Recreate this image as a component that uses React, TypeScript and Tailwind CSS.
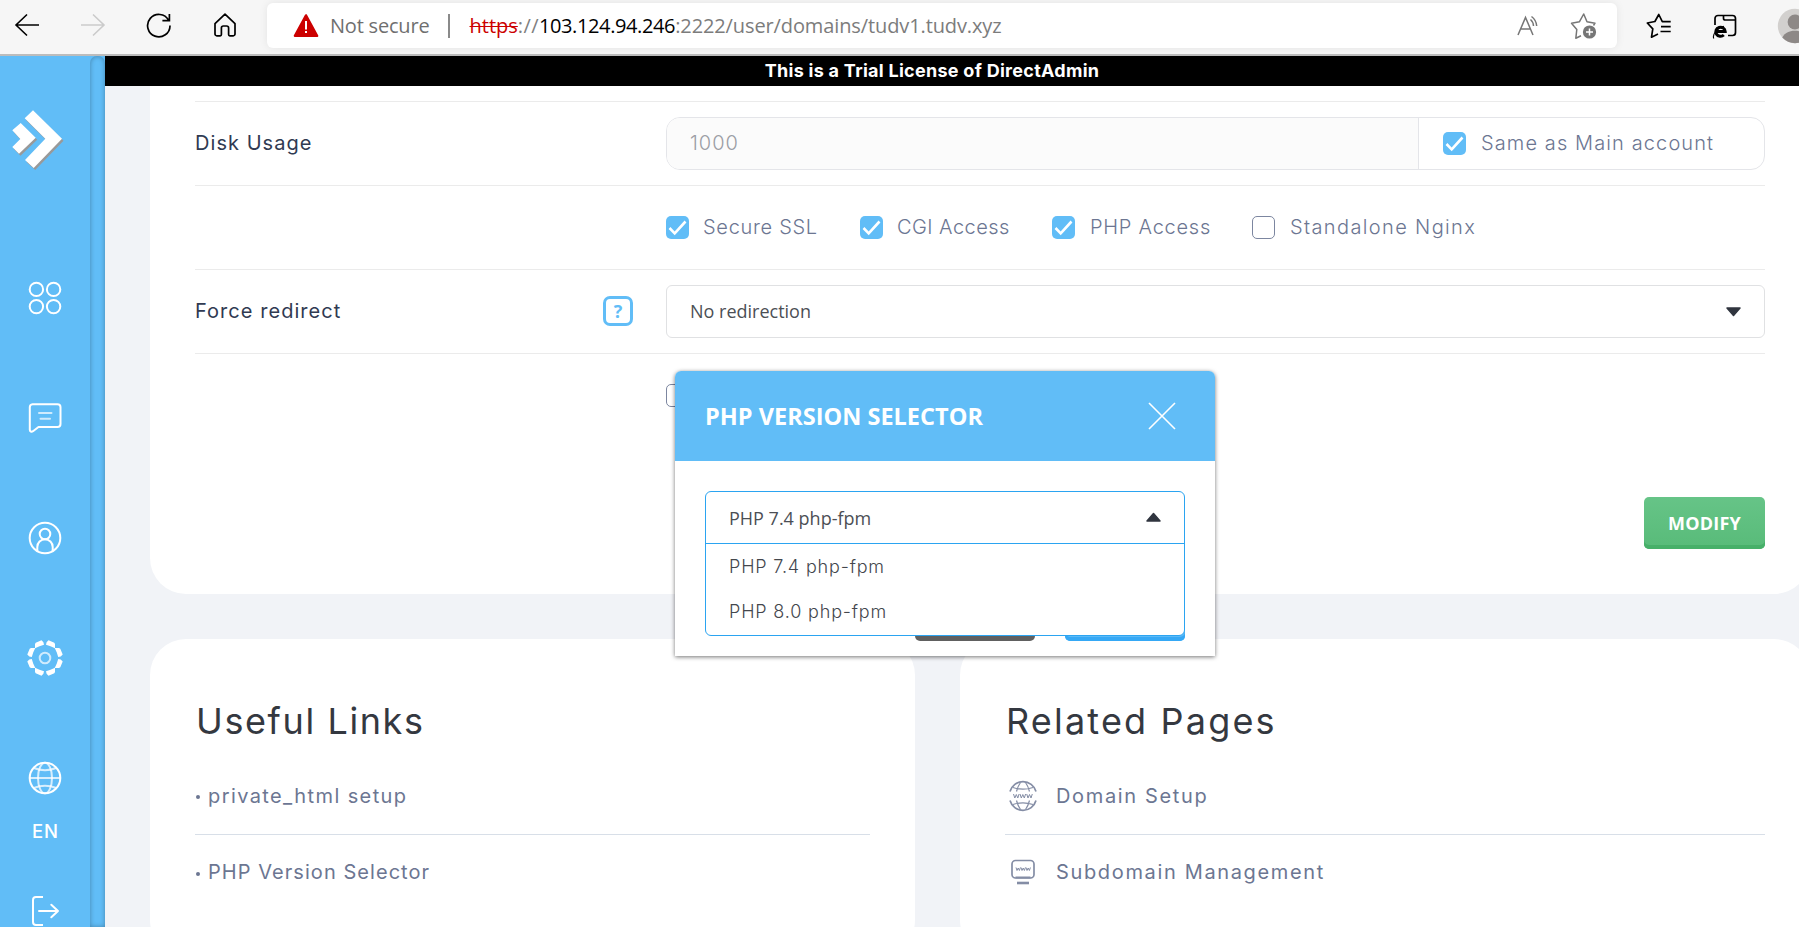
import React from 'react';

function Toolbar() {
  return (
    <header className="flex h-[56px] shrink-0 items-start border-b-2 border-[#bcbcbc] bg-[#f6f6f6] font-['Open_Sans',sans-serif]">
      <svg className="mt-[13px] ml-[14px] h-6 w-[26px] shrink-0" viewBox="0 0 26 24" fill="none" stroke="#000" strokeWidth="1.6">
        <path d="M25 12H2M13 1.5L2 12l11 10.5" />
      </svg>
      <svg className="mt-[13px] ml-[40px] h-6 w-[26px] shrink-0" viewBox="0 0 26 24" fill="none" stroke="#cbcbcb" strokeWidth="1.6">
        <path d="M1 12h23M13 1.5L24 12 13 22.5" />
      </svg>
      <svg className="mt-[12px] ml-[40px] h-[27px] w-[27px] shrink-0" viewBox="0 0 27 27" fill="none" stroke="#000" strokeWidth="1.7">
        <path d="M24 13.5A11.2 11.2 0 1 1 22.6 8.2M23.4 2v6.6h-7" />
      </svg>
      <svg className="mt-[12px] ml-[39px] h-[26px] w-[26px] shrink-0" viewBox="0 0 26 26" fill="none" stroke="#000" strokeWidth="1.7" strokeLinejoin="round">
        <path d="M3 11.6L13 2.2l10 9.4V22a1.8 1.8 0 0 1-1.8 1.8h-3.4A1.2 1.2 0 0 1 16.600 22.600V16a2 2 0 0 0-2-2h-3.200a2 2 0 0 0-2 2v6.600A1.200 1.200 0 0 1 8.200 23.800H4.800A1.800 1.800 0 0 1 3 22z" />
      </svg>
      <div className="mt-[3px] ml-[29px] flex h-[45px] w-[1350px] shrink-0 items-center rounded-[6px] bg-white text-[20px] leading-[45px] text-[#6f6f6f] shadow-[0_0_8px_rgba(0,0,0,0.08)]">
        <svg className="ml-[26px] h-6 w-[26px] shrink-0" viewBox="0 0 26 24">
          <path d="M13 1.500L24 21.800H2z" fill="#cc0000" stroke="#cc0000" strokeWidth="2.600" strokeLinejoin="round" />
          <rect x="12" y="7" width="2" height="8.500" fill="#fff" />
          <rect x="12" y="17" width="2" height="2" fill="#fff" />
        </svg>
        <span className="ml-[11px] w-[100px] whitespace-nowrap tracking-[-0.2px]">Not secure</span>
        <span className="ml-[18px] h-6 w-[1.500px] bg-[#8a8a8a]" />
        <span className="ml-[20px] flex whitespace-nowrap">
          <span className="text-[#cc0000] line-through decoration-1">https</span>
          <span className="tracking-[0.400px] text-[#808080]">://</span>
          <span className="tracking-[-0.380px] text-black">103.124.94.246</span>
          <span className="tracking-[-0.110px] text-[#7c7c7c]">:2222/user/domains/tudv1.tudv.xyz</span>
        </span>
        <svg className="mr-[28px] ml-auto h-[26px] w-[26px] shrink-0" viewBox="0 0 26 26" fill="none" stroke="#767676" strokeWidth="1.500">
          <path d="M2 22L9.500 4.500 17 22M5 16h9M14.500 6.500a9 9 0 0 1 3 6.500M15.500 3.500a13 13 0 0 1 5.200 9.500" />
        </svg>
        <svg className="mr-[19px] h-[28px] w-[28px] shrink-0" viewBox="0 0 28 28" fill="none">
          <path d="M11 23.800l-5.200 2.500 1-8.800-5.300-6.300 8-1.500 4.200-7.700L17 9.700l8 1.500-1.500 2.300" stroke="#767676" strokeWidth="1.500" strokeLinejoin="round" />
          <circle cx="19.500" cy="20" r="6.600" fill="#767676" />
          <path d="M19.500 16.500v7M16 20h7" stroke="#fff" strokeWidth="1.500" />
        </svg>
      </div>
      <svg className="mt-[12px] ml-[28px] h-[27px] w-[28px] shrink-0" viewBox="0 0 28 27" fill="none" stroke="#000" strokeWidth="1.700" strokeLinejoin="round">
        <path d="M13 22l-6.500 3.200 1.300-8.400L2.300 11l7.600-1.500L13.800 2.500l3.500 7.200h8.400M16 14.600h9.700M15.500 19.500h10.200" />
      </svg>
      <svg className="mt-[12px] ml-[39px] h-[28px] w-[26px] shrink-0" viewBox="0 0 26 28" fill="none" stroke="#000">
        <path d="M3 13V6.500A3 3 0 0 1 6 3.500h14.500a3 3 0 0 1 3 3V20.500a3 3 0 0 1-3 3h-4.500M11.500 3.500v2.700a1.800 1.800 0 0 0 1.800 1.800h10" strokeWidth="1.700" />
        <path d="M3.800 19.500H13.200A4.700 4.500 0 1 0 11.800 23" strokeWidth="3" />
        <path d="M1.800 26.500C0 23 5 15.500 12 14.200" strokeWidth="1.100" />
      </svg>
      <svg className="mt-[8px] ml-[39px] h-[36px] w-[36px] shrink-0" viewBox="0 0 36 36">
        <circle cx="18" cy="18" r="17.200" fill="#d2d0ce" />
        <circle cx="18" cy="14" r="7.400" fill="#8d8886" />
        <path d="M5.300 29.600C7.500 25 12 22.800 18 22.800s10.500 2.200 12.700 6.800A17.200 17.200 0 0 1 5.300 29.600z" fill="#8d8886" />
      </svg>
    </header>
  );
}

function NavCell({ children }: { children: React.ReactNode }) {
  return <div className="flex h-[120px] shrink-0 items-center justify-center">{children}</div>;
}

const quarterTurns = [0, 90, 180, 270];

function Sidebar() {
  return (
    <nav className="flex h-full w-[105px] shrink-0 bg-[#61bdf7]">
      <div className="flex w-[90px] flex-col overflow-hidden">
        <div className="h-[182px] shrink-0 pt-[52px] pl-[10px]">
          <svg className="h-[64px] w-[56px]" viewBox="10 108 56 64">
            <g fill="#999" transform="translate(1.500 2)">
              <path d="M33 110.300L62 138.700 33.700 168 25 160 45.300 138.700 24.700 118.300z" />
              <path d="M20.700 123L35.700 137.700 19 153.700 12.300 147 20.300 139 12.300 130.300z" />
            </g>
            <path d="M33 110.300L62 138.700 33.700 168 25 160 45.300 138.700 24.700 118.300z" fill="#fff" />
            <path d="M20.700 123L35.700 137.700 19 153.700 12.300 147 20.300 139 12.300 130.300z" fill="#fff" />
          </svg>
        </div>
        <NavCell>
          <svg className="h-9 w-9" viewBox="0 0 36 36" fill="none" stroke="#fff" strokeWidth="2">
            <circle cx="9.400" cy="9.400" r="6.700" />
            <circle cx="26.600" cy="9.400" r="6.700" />
            <circle cx="9.400" cy="26.600" r="6.700" />
            <circle cx="26.600" cy="26.600" r="6.700" />
          </svg>
        </NavCell>
        <NavCell>
          <svg className="h-9 w-9" viewBox="0 0 36 36" fill="none" stroke="#fff" strokeWidth="2" strokeLinecap="round" strokeLinejoin="round">
            <path d="M5.500 4.300h25a3 3 0 0 1 3 3V24a3 3 0 0 1-3 3H11.500L6 31.200C4.500 32.200 2.800 31.500 2.800 29.700V7.300a3 3 0 0 1 2.700-3z" />
            <path d="M12 13h12.500M13.500 18.800h9.500" strokeOpacity="0.700" />
          </svg>
        </NavCell>
        <NavCell>
          <svg className="h-9 w-9" viewBox="0 0 36 36" fill="none" stroke="#fff" strokeWidth="2">
            <circle cx="18" cy="18" r="15.300" />
            <circle cx="18" cy="14" r="5.300" />
            <path d="M10.300 31.200v-4.200a7.700 7.700 0 0 1 15.400 0v4.200" />
          </svg>
        </NavCell>
        <NavCell>
          <svg className="h-9 w-9" viewBox="0 0 36 36" fill="none">
            {quarterTurns.map((a) => (
              <g key={a} fill="#fff" transform={`rotate(${a} 18 18)`}>
                <path d="M21.500 0.300L27.300 2.700 28 4V8.300L23.500 6.200 19 4.800 19.600 2.300z" />
                <path d="M14.500 0.300L8.700 2.700 8 4V8.300L12.500 6.200 17 4.800 16.400 2.300z" />
              </g>
            ))}
            <circle cx="18" cy="18" r="5.300" stroke="#fff" strokeWidth="2" strokeOpacity="0.700" />
          </svg>
        </NavCell>
        <div className="flex h-[170px] shrink-0 flex-col items-center pt-[42px]">
          <svg className="h-9 w-9 shrink-0" viewBox="0 0 36 36" fill="none" stroke="#fff" strokeWidth="2">
            <circle cx="18" cy="18" r="15.300" />
            <g strokeOpacity="0.750">
              <path d="M2.700 18h30.600M7 8c6.500 3 15.500 3 22 0M7 28c6.500-3 15.500-3 22 0" />
              <ellipse cx="18" cy="18" rx="7" ry="15.300" />
            </g>
          </svg>
          <span className="mt-[23px] pl-[1px] font-['Inter',sans-serif] text-[18.500px] leading-6 font-medium tracking-[1px] text-white">EN</span>
        </div>
        <svg className="mt-[5px] ml-[30px] h-[34px] w-[30px] shrink-0" viewBox="0 0 30 34" fill="none" stroke="#fff" strokeWidth="2" strokeLinecap="round" strokeLinejoin="round">
          <path d="M13 4H6A3 3 0 0 0 3 7v22a3 3 0 0 0 3 3h7" strokeLinecap="butt" />
          <path d="M9 18h19M21.300 11.800L28 18l-6.700 6.200" />
        </svg>
      </div>
      <div className="w-[15px] rounded-t-[7px] shadow-[inset_0_0_5px_rgba(0,0,0,0.3)]" />
    </nav>
  );
}

function Check({ on = false }: { on?: boolean }) {
  return on ? (
    <span className="flex h-[23px] w-[23px] shrink-0 items-center justify-center rounded-[5px] bg-[#61bdf7]">
      <svg className="h-[17px] w-[19px]" viewBox="0 0 19 17" fill="none" stroke="#fff" strokeWidth="2.600">
        <path d="M1.500 9l5.200 5.300L17.500 2.500" />
      </svg>
    </span>
  ) : (
    <span className="h-[23px] w-[23px] shrink-0 rounded-[5px] border border-[#7c86a0]" />
  );
}

function Row({ label, children }: { label?: string; children: React.ReactNode }) {
  return (
    <div className="flex h-[84px] shrink-0 items-center border-t border-[#ebebeb]">
      <div className="w-[408px] shrink-0 pb-[1px] tracking-[1.050px] text-[#303a52]">{label}</div>
      {children}
    </div>
  );
}

function DomainCard() {
  const label = 'whitespace-nowrap font-light text-[#6c7692]';
  return (
    <section className="flex h-[508px] w-[1660px] shrink-0 flex-col rounded-b-[36px] bg-white px-[45px] pt-[15px]">
      <Row label="Disk Usage">
        <div className="ml-[63px] flex h-[53px] w-[1099px] overflow-hidden rounded-[14px] border border-[#e4e5e9]">
          <div className="flex w-[752px] items-center border-r border-[#e4e5e9] bg-[#fbfbfb] pb-[1px] pl-[23px] font-light tracking-[1px] text-[#9b9ea5]">1000</div>
          <div className={`flex items-center pl-[24px] ${label}`}>
            <Check on />
            <span className="ml-[15px] pb-[1px] tracking-[1.110px]">Same as Main account</span>
          </div>
        </div>
      </Row>
      <Row>
        <div className={`ml-[63px] flex items-center ${label}`}>
          <div className="flex w-[194px] items-center gap-[14px]"><Check on /><span className="pb-[1px] tracking-[0.700px]">Secure SSL</span></div>
          <div className="flex w-[192px] items-center gap-[14px]"><Check on /><span className="pb-[1px] tracking-[0.450px]">CGI Access</span></div>
          <div className="flex w-[200px] items-center gap-[15px]"><Check on /><span className="pb-[1px] tracking-[0.750px]">PHP Access</span></div>
          <div className="flex items-center gap-[15px]"><Check /><span className="pb-[1px] tracking-[1.370px]">Standalone Nginx</span></div>
        </div>
      </Row>
      <Row label="Force redirect">
        <div className="mb-[1px] flex h-[30px] w-[30px] shrink-0 items-center justify-center rounded-[7px] border-3 border-[#61bdf7] font-['Open_Sans',sans-serif] text-[18px] font-bold text-[#61bdf7]">?</div>
        <div className="ml-[33px] flex h-[53px] w-[1099px] items-center justify-between rounded-[6px] border border-[#e0e1e3] pr-[22px] pl-[23px] font-['Open_Sans',sans-serif] text-[18px] text-[#4c4f55]">
          <span className="pb-[2px]">No redirection</span>
          <svg className="h-[10px] w-[17px]" viewBox="0 0 17 10"><path d="M2 1h13L8.500 8.500z" fill="#30353f" stroke="#30353f" strokeWidth="1.500" strokeLinejoin="round" /></svg>
        </div>
      </Row>
      <div className="flex h-[110px] shrink-0 items-start border-t border-[#ebebeb] pt-[30px] pl-[471px]"><Check /></div>
      <button className="mt-[34px] flex h-[52px] w-[121px] shrink-0 items-center justify-center self-end rounded-[5px] bg-linear-to-b from-[#66c487] to-[#58bb79] font-['Open_Sans',sans-serif] text-[18px] leading-6 font-bold tracking-[0.200px] text-white shadow-[inset_0_-4px_0_#47b069]">MODIFY</button>
    </section>
  );
}

function WwwGlobe() {
  return (
    <svg className="ml-[1px] h-[34px] w-[34px] shrink-0" viewBox="0 0 34 34" fill="none" stroke="#848da5" strokeWidth="1.700">
      <path d="M4 12.500a13.500 13.500 0 0 1 26 0M4 21.500a13.500 13.500 0 0 0 26 0" />
      <path d="M7 8.500c6 2 14 2 20 0M7 25.500c6-2 14-2 20 0M10.500 12.500c1-4 2.500-7 4-9M23.500 12.500c-1-4-2.500-7-4-9M10.500 21.500c1 4 2.500 7 4 9M23.500 21.500c-1 4-2.500 7-4 9" strokeWidth="1.200" />
      <path d="M7.500 15l1.300 4 1.500-3.500 1.500 3.500 1.300-4M14 15l1.300 4 1.500-3.500 1.500 3.500 1.300-4M20.700 15l1.300 4 1.500-3.500 1.500 3.500 1.300-4" strokeWidth="1" />
    </svg>
  );
}

function WwwMonitor() {
  return (
    <svg className="ml-[1px] h-[34px] w-[34px] shrink-0" viewBox="0 0 34 34" fill="none" stroke="#848da5" strokeWidth="1.700">
      <rect x="6" y="5.500" width="22" height="17.500" rx="3.500" />
      <path d="M9.500 22.500h15" strokeWidth="2" />
      <path d="M11 28h12" strokeWidth="2.600" />
      <path d="M10 12.500l1 3 1.200-2.500 1.200 2.500 1-3M15 12.500l1 3 1.200-2.500 1.200 2.500 1-3M20 12.500l1 3 1.200-2.500 1.200 2.500 1-3" strokeWidth="1" />
    </svg>
  );
}

function LinkCards() {
  const line = 'flex h-[76px] items-center border-[#d8dfe8] pb-[2px] text-[#6c7692]';
  const bullet = 'mt-[3px] mr-[8px] ml-[1px] h-1 w-1 rounded-full bg-[#6c7692]';
  return (
    <div className="mt-[45px] flex shrink-0 gap-[45px]">
      <section className="h-[317px] w-[765px] shrink-0 rounded-[36px] bg-white px-[45px] pt-[55px]">
        <h2 className="pl-[1px] text-[36px] leading-[54px] tracking-[1.600px] text-[#343840]">Useful Links</h2>
        <div className={`mt-[11px] border-b ${line}`}>
          <span className={bullet} />
          <span className="tracking-[1.400px]">private_html setup</span>
        </div>
        <div className={line}>
          <span className={bullet} />
          <span className="tracking-[1.050px]">PHP Version Selector</span>
        </div>
      </section>
      <section className="h-[317px] w-[850px] shrink-0 rounded-[36px] bg-white px-[45px] pt-[55px]">
        <h2 className="pl-[1px] text-[36px] leading-[54px] tracking-[2.180px] text-[#343840]">Related Pages</h2>
        <div className={`mt-[11px] border-b ${line}`}>
          <WwwGlobe />
          <span className="ml-[16px] tracking-[1.650px]">Domain Setup</span>
        </div>
        <div className={line}>
          <WwwMonitor />
          <span className="ml-[16px] tracking-[1.650px]">Subdomain Management</span>
        </div>
      </section>
    </div>
  );
}

function VersionDialog() {
  return (
    <div role="dialog" className="absolute top-[371px] left-[675px] flex h-[285px] w-[540px] flex-col rounded-t-[6px] bg-white shadow-[0_1px_4px_rgba(0,0,0,0.55)]">
      <div className="flex h-[90px] shrink-0 items-center justify-between rounded-t-[6px] bg-[#61bdf7] pr-[39px] pl-[30px]">
        <h3 className="font-['Open_Sans',sans-serif] text-[23.500px] font-bold tracking-[0.020px] text-white">PHP VERSION SELECTOR</h3>
        <svg className="mb-[1px] h-7 w-7" viewBox="0 0 28 28" stroke="#fff" strokeWidth="1.600"><path d="M1 1l26 26M27 1L1 27" /></svg>
      </div>
      <div className="flex justify-end gap-[30px] px-[30px] pt-[128px]">
        <div className="h-[52px] w-[120px] rounded-[5px] bg-[#606060]" />
        <div className="h-[52px] w-[120px] rounded-[5px] bg-[#5bb9f7] shadow-[inset_0_-4px_0_#35a8f5]" />
      </div>
      <div className="absolute top-[120px] left-[30px] flex w-[480px] flex-col rounded-[6px] border border-[#2ba4f1] bg-white">
        <div className="flex h-[52px] items-center justify-between border-b border-[#2ba4f1] pr-[22px] pl-[23px] font-['Open_Sans',sans-serif] text-[18px] text-[#4c4f55]">
          <span>PHP 7.4 php-fpm</span>
          <svg className="mb-[1px] h-[10px] w-[17px]" viewBox="0 0 17 10"><path d="M2 9h13L8.500 1.500z" fill="#30353f" stroke="#30353f" strokeWidth="1.500" strokeLinejoin="round" /></svg>
        </div>
        <div className="flex h-[45px] items-center pt-[1px] pl-[23px] text-[18px] font-light tracking-[0.830px] text-[#44474d]">PHP 7.4 php-fpm</div>
        <div className="mb-[1px] flex h-[45px] items-center pt-[1px] pl-[23px] text-[18px] font-light tracking-[0.830px] text-[#44474d]">PHP 8.0 php-fpm</div>
      </div>
    </div>
  );
}

export default function App() {
  return (
    <div className="relative flex h-[927px] w-[1799px] flex-col overflow-hidden bg-[#f1f3f7] font-['Inter',sans-serif] text-[20px] leading-7">
      <Toolbar />
      <div className="flex min-h-0 flex-1">
        <Sidebar />
        <main className="flex min-w-0 flex-1 flex-col overflow-hidden">
          <div className="flex h-[30px] shrink-0 items-center justify-center bg-black pr-[40px] text-[18px] font-bold tracking-[0.280px] text-white">
            This is a Trial License of DirectAdmin
          </div>
          <div className="flex flex-col pl-[45px]">
            <DomainCard />
            <LinkCards />
          </div>
        </main>
      </div>
      <VersionDialog />
    </div>
  );
}
